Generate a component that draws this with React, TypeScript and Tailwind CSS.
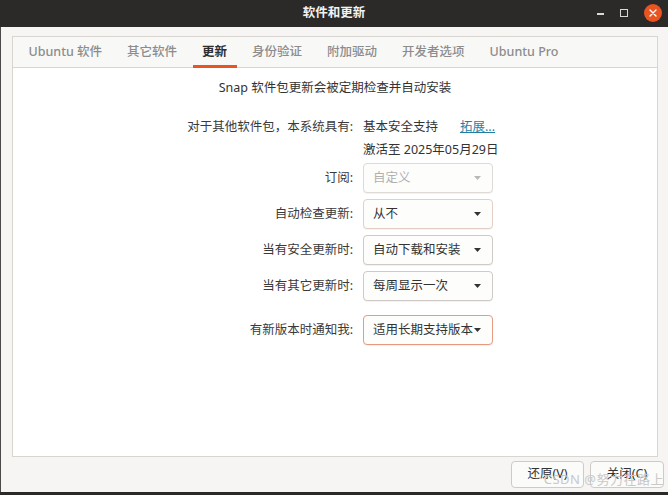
import React from "react";

const font = { fontFamily: '"Noto Sans", "Noto Sans CJK SC", sans-serif' };

const tabs = ["Ubuntu 软件", "其它软件", "更新", "身份验证", "附加驱动", "开发者选项", "Ubuntu Pro"];

function Arrow({ disabled }: { disabled?: boolean }) {
  return (
    <svg width="9" height="6" viewBox="0 0 9 6" className="shrink-0">
      <path d="M1 1 L8 1 L4.5 5 Z" fill={disabled ? "#b8b8b8" : "#333333"} />
    </svg>
  );
}

type ComboProps = { value: string; disabled?: boolean; border?: string };

function Combo({ value, disabled, border = "border-[#cfcac5]" }: ComboProps) {
  return (
    <div
      className={`w-[130px] h-[30px] rounded-[4px] border ${border} bg-[#fdfdfc] shadow-[0_1px_0_rgba(0,0,0,0.05)] flex items-center justify-between pl-[9px] pr-[10px]`}
    >
      <span className={disabled ? "text-[#b0b0b0]" : "text-[#333]"}>{value}</span>
      <Arrow disabled={disabled} />
    </div>
  );
}

function Row({ label, children, className = "" }: { label: string; children: React.ReactNode; className?: string }) {
  return (
    <div className={`grid grid-cols-[340px_1fr] gap-x-[10px] items-center ${className}`}>
      <div className="text-right text-[#3a3a3a]">{label}</div>
      <div>{children}</div>
    </div>
  );
}

export default function App() {
  return (
    <div className="w-[668px] h-[495px] bg-[#2b2a29] flex flex-col text-[12.5px]" style={font}>
      {/* title bar */}
      <div className="h-[27px] shrink-0 relative flex items-center justify-center">
        <span className="text-[#f2f2f2] font-bold text-[12.5px]">软件和更新</span>
        <div className="absolute right-[6px] top-0 h-[25px] flex items-center gap-[16px]">
          <div className="w-[7px] h-[1.5px] bg-[#d8d8d8] mt-[3px]" />
          <div className="w-[8px] h-[8px] border border-[#d8d8d8]" />
          <div className="w-[18px] h-[18px] rounded-full bg-[#e95420] flex items-center justify-center">
            <svg width="8" height="8" viewBox="0 0 8 8">
              <path d="M1 1 L7 7 M7 1 L1 7" stroke="#fff" strokeWidth="1.4" strokeLinecap="round" />
            </svg>
          </div>
        </div>
      </div>

      {/* window body */}
      <div className="flex-1 bg-[#f6f5f4] border-l border-[#4a4a4a] flex flex-col pl-[11px] pr-[10px] pt-[9px] relative">
        <div className="flex-1 border border-[#d9d5d1] flex flex-col bg-white">
          {/* tabs */}
          <div className="h-[31px] shrink-0 bg-[#f8f8f7] border-b border-[#d9d5d1] flex pl-[3px]">
            {tabs.map((t) => {
              const active = t === "更新";
              return (
                <div key={t} className="relative px-[12.5px] flex items-center">
                  <span className={active ? "text-[#2e2e2e] font-bold" : "text-[#8c8c8c] font-medium"}>{t}</span>
                  {active && <div className="absolute left-[3px] right-[3px] bottom-[-1px] h-[3px] bg-[#e95420]" />}
                </div>
              );
            })}
          </div>

          {/* content */}
          <div className="flex-1 flex flex-col pt-[10px] leading-[20px]">
            <div className="text-center text-[#333]">Snap 软件包更新会被定期检查并自动安装</div>

            <Row label="对于其他软件包，本系统具有:" className="mt-[19px]">
              <div className="flex items-center text-[#333]">
                <span>基本安全支持</span>
                <span className="ml-[22px] text-[#1f7ea3] underline">拓展...</span>
              </div>
            </Row>
            <Row label="" className="mt-[3px]">
              <span className="text-[#333]">激活至 2025年05月29日</span>
            </Row>

            <div className="flex flex-col gap-[6px] mt-[3px]">
              <Row label="订阅:">
                <Combo value="自定义" disabled border="border-[#dedad6]" />
              </Row>
              <Row label="自动检查更新:">
                <Combo value="从不" border="border-[#e3cfc6]" />
              </Row>
              <Row label="当有安全更新时:">
                <Combo value="自动下载和安装" />
              </Row>
              <Row label="当有其它更新时:">
                <Combo value="每周显示一次" />
              </Row>
            </div>

            <Row label="有新版本时通知我:" className="mt-[14px]">
              <Combo value="适用长期支持版本" border="border-[#e89a80]" />
            </Row>
          </div>
        </div>

        {/* footer */}
        <div className="h-[35px] shrink-0 flex justify-end items-start pt-[4px] gap-[6px]">
          <button className="w-[73px] h-[27px] rounded-[4px] border border-[#cfcac5] bg-[#fbfbfa] text-[#333]">还原(V)</button>
          <button className="w-[74px] h-[27px] rounded-[4px] border border-[#cfcac5] bg-[#fbfbfa] text-[#333] mr-[-6px]">关闭(C)</button>
        </div>

        <div className="absolute right-[4px] bottom-[3px] text-[13px] text-[#c9c9c9] tracking-[0.5px]">CSDN @努力在路上</div>
      </div>

      <div className="h-[3px] shrink-0 bg-[#2b2a29]" />
    </div>
  );
}
